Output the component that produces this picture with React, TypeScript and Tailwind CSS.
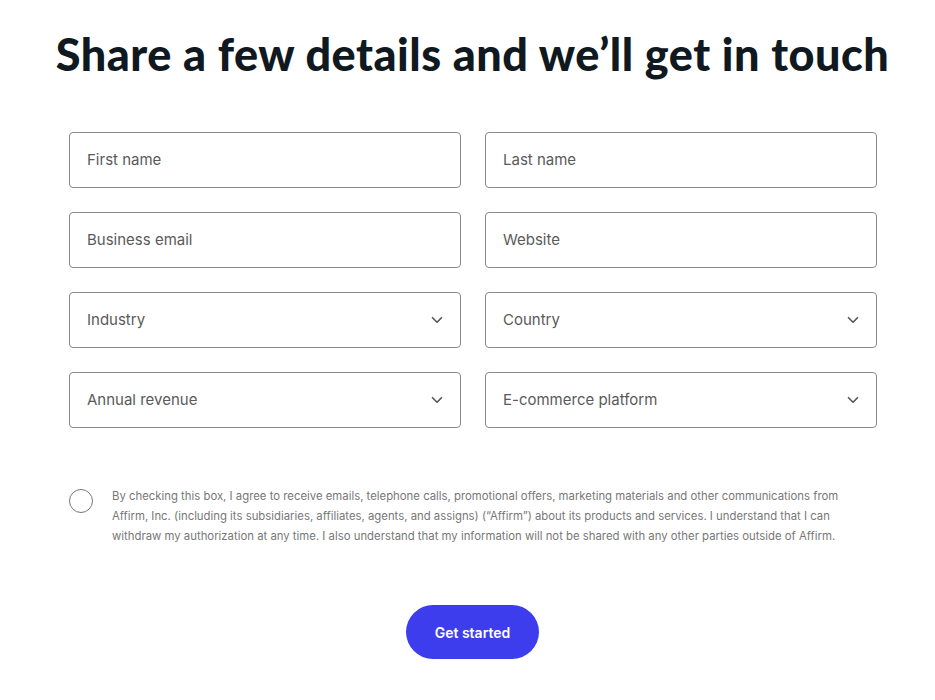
import { ChevronDown } from 'lucide-react'

const fields: { label: string; select?: boolean }[] = [
  { label: 'First name' },
  { label: 'Last name' },
  { label: 'Business email' },
  { label: 'Website' },
  { label: 'Industry', select: true },
  { label: 'Country', select: true },
  { label: 'Annual revenue', select: true },
  { label: 'E-commerce platform', select: true },
]

function Field({ label, select }: { label: string; select?: boolean }) {
  return (
    <div className="h-[56px] rounded-[4px] border border-[#8a8a8a] flex items-center justify-between pl-[17px] pr-[14px]">
      <span className="text-[15px] text-[#5a5a5a]">{label}</span>
      {select && <ChevronDown className="w-[18px] h-[18px] text-[#555]" strokeWidth={2.2} />}
    </div>
  )
}

export default function App() {
  return (
    <div className="w-[935px] h-[700px] bg-white font-['Inter',sans-serif] pt-[27px]">
      <h1 className="text-center pl-[10px] font-['Lato',sans-serif] font-black text-[45px] leading-[54px] tracking-[0.5px] text-[#101820] whitespace-nowrap">
        Share a few details and we’ll get in touch
      </h1>

      <div className="grid grid-cols-2 gap-x-[24px] gap-y-[24px] mx-[69px] mt-[51px] w-[808px]">
        {fields.map((f) => (
          <Field key={f.label} label={f.label} select={f.select} />
        ))}
      </div>

      <div className="flex items-start ml-[69px] mt-[73px]">
        <div className="w-[24px] h-[24px] rounded-full border border-[#777] mt-[-12px] shrink-0" />
        <p className="ml-[19px] w-[740px] text-[11.35px] leading-[20px] text-[#777] mt-[-15px]">
          By checking this box, I agree to receive emails, telephone calls, promotional offers, marketing materials and other communications from Affirm, Inc. (including its subsidiaries, affiliates, agents, and assigns) (“Affirm”) about its products and services. I understand that I can withdraw my authorization at any time. I also understand that my information will not be shared with any other parties outside of Affirm.
        </p>
      </div>

      <div className="flex justify-center mt-[59px] pl-[10px]">
        <button className="w-[133px] h-[54px] rounded-full bg-[#3d3ded] text-white text-[14px] font-semibold">
          Get started
        </button>
      </div>
    </div>
  )
}
